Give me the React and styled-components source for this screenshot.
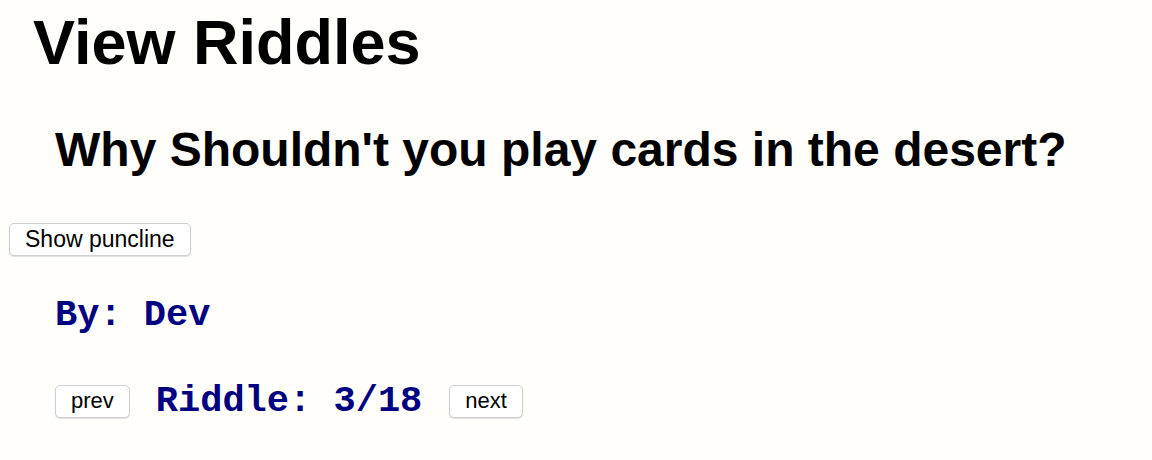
import React from 'react'
import styled, { createGlobalStyle } from 'styled-components'

const GlobalStyle = createGlobalStyle`
  body {
    margin: 0;
    background: #fffefa;
    font-family: "Liberation Sans", Arial, sans-serif;
    color: #000;
  }
`

const Page = styled.div`
  display: flex;
  flex-direction: column;
  align-items: flex-start;
  padding-top: 5px;
`

const Title = styled.h1`
  margin: 0 0 0 33px;
  font-size: 63px;
  line-height: 74px;
  font-weight: 700;
`

const Question = styled.h2`
  margin: 43px 0 0 55px;
  font-size: 48px;
  line-height: 55px;
  font-weight: 700;
`

const Button = styled.button`
  height: 33px;
  padding: 0 15px;
  background: #fff;
  border: 1px solid #cfcfcf;
  border-radius: 5px;
  box-shadow: 0 1px 1px rgba(0, 0, 0, 0.12);
  font-family: "Liberation Sans", Arial, sans-serif;
  font-size: ${p => p.$size || '22px'};
  color: #000;
  cursor: pointer;
  margin: ${p => p.$margin || '0'};
`

const Mono = styled.h3`
  margin: ${p => p.$margin || '0'};
  font-family: "Liberation Mono", "Courier New", monospace;
  font-size: 37px;
  line-height: 42px;
  font-weight: 700;
  color: #000080;
`

const Pager = styled.div`
  display: flex;
  align-items: center;
  margin: 44px 0 0 55px;
`

class App extends React.Component {
  constructor(props) {
    super(props)
    this.state = { index: 3, total: 18 }
  }

  render() {
    const { index, total } = this.state
    return (
      <Page>
        <GlobalStyle />
        <Title>View Riddles</Title>
        <Question>Why Shouldn't you play cards in the desert?</Question>
        <Button $margin="46px 0 0 9px" $size="23px">Show puncline</Button>
        <Mono $margin="38px 0 0 55px">By: Dev</Mono>
        <Pager>
          <Button>prev</Button>
          <Mono $margin="0 27px 0 26px">
            Riddle: {index}/{total}
          </Mono>
          <Button>next</Button>
        </Pager>
      </Page>
    )
  }
}

export default App
